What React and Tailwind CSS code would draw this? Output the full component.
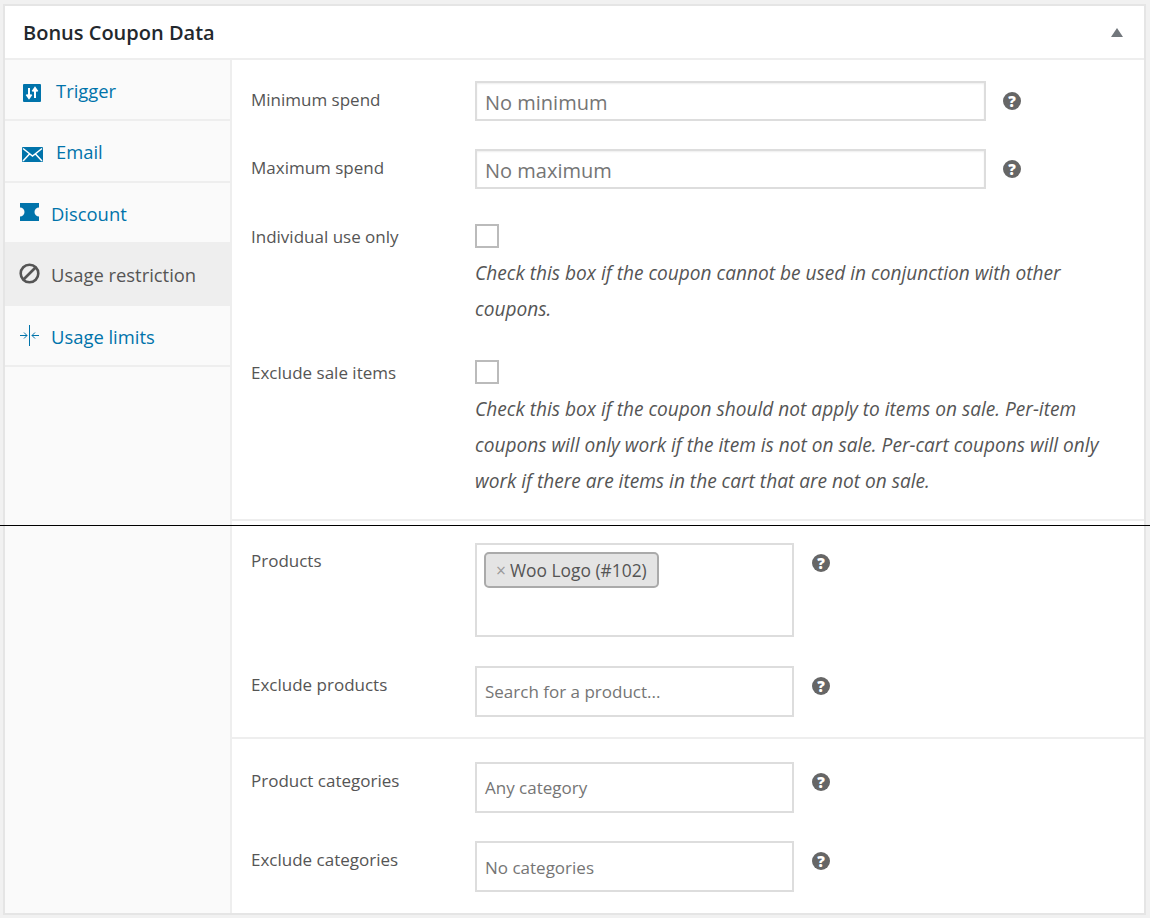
function HelpTip() {
  return (
    <span className="flex w-[18px] h-[18px] shrink-0 items-center justify-center rounded-full bg-[#666] text-[15px] leading-none font-extrabold text-white">?</span>
  );
}

function TextField({ placeholder }) {
  return (
    <div className="flex h-[40px] w-[511px] items-center border-2 border-[#ddd] bg-white pl-2 pt-[3px] text-[20px] text-[#757575] shadow-[inset_0_1px_2px_rgba(0,0,0,0.07)]">
      {placeholder}
    </div>
  );
}

function SelectField({ placeholder, className = "" }) {
  return (
    <div className={`flex h-[51px] w-[319px] items-center border-2 border-[#ddd] bg-white pl-2 text-[17px] text-[#757575] ${className}`}>
      {placeholder}
    </div>
  );
}

function Tab({ icon, label, active, h }) {
  return (
    <div className={`flex items-center text-[18.4px] ${h} ${active ? "bg-[#eee] text-[#555]" : "text-[#0073aa]"}`}>
      {icon}
      <span>{label}</span>
    </div>
  );
}

const tabs = [
  {
    label: "Trigger",
    h: "h-[61px] pt-[2px] border-b-2 border-[#eee]",
    icon: (
      <svg className="ml-[18px] mr-[15px] mt-[4px] w-[18px] h-[18px]" viewBox="0 0 18 18">
        <rect width="18" height="18" rx="1" fill="#0073aa" />
        <path d="M6 4v9M3.500 10.500 6 14l2.500-3.500M12 14V5M9.500 7.500 12 4l2.500 3.500" stroke="#fff" strokeWidth="2" fill="none" />
      </svg>
    ),
  },
  {
    label: "Email",
    h: "h-[62px] pt-[2px] border-b-2 border-[#eee]",
    icon: (
      <svg className="ml-[17px] mr-[13px] mt-[4px] w-[21px] h-[15px]" viewBox="0 0 21 15">
        <rect width="21" height="15" rx="1" fill="#0073aa" />
        <path d="M1 1.500 10.500 9 20 1.500M1 14l6.500-7M20 14l-6.500-7" stroke="#fff" strokeWidth="1.500" fill="none" />
      </svg>
    ),
  },
  {
    label: "Discount",
    h: "h-[59px] pt-[2px]",
    icon: (
      <svg className="ml-[14px] mr-[11px] mb-[3px] w-[21px] h-[18px]" viewBox="0 0 21 18">
        <path d="M1 0h19v4.500a4.500 4.500 0 0 0 0 9V18H1v-4.500a4.500 4.500 0 0 0 0-9z" fill="#0073aa" />
      </svg>
    ),
  },
  {
    label: "Usage restriction",
    active: true,
    h: "h-[64px] pt-[2px]",
    icon: (
      <svg className="ml-[14px] mr-[11px] mb-[3px] w-[21px] h-[21px]" viewBox="0 0 21 21">
        <circle cx="10.500" cy="10.500" r="8.800" stroke="#555" strokeWidth="2.600" fill="none" />
        <path d="M4.500 16.500l12-12" stroke="#555" strokeWidth="2.600" />
      </svg>
    ),
  },
  {
    label: "Usage limits",
    h: "h-[61px] pt-[3px] border-b-2 border-[#eee]",
    icon: (
      <svg className="ml-[14px] mr-[11px] mb-[4px] w-[21px] h-[21px]" viewBox="0 0 21 21" stroke="#0073aa" fill="none">
        <path d="M10.500 0v21" />
        <path d="M1 10.500h7M5 7.500l3 3-3 3M20 10.500h-7M16 7.500l-3 3 3 3" />
      </svg>
    ),
  },
];

function Label({ children, className = "" }) {
  return <div className={`w-[224px] shrink-0 text-[17px] text-[#555] ${className}`}>{children}</div>;
}

function Checkbox() {
  return <div className="w-[24px] h-[24px] border-2 border-[#bbb] bg-white" />;
}

export default function App() {
  return (
    <div className="relative h-[918px] w-[1150px] overflow-hidden bg-[#f1f1f1] pt-[4px] pl-[3px] font-['Open_Sans',sans-serif]">
      <div className="h-[911px] w-[1143px] border-2 border-[#e5e5e5] bg-white flex flex-col">
        <div className="flex h-[54px] shrink-0 items-center justify-between border-b-2 border-[#eee] pl-[18px] pr-[21px]">
          <h2 className="pt-[2px] text-[20px] font-semibold text-[#23282d]">Bonus Coupon Data</h2>
          <span className="w-0 h-0 border-x-[6px] border-x-transparent border-b-[9px] border-b-[#72777c]" />
        </div>
        <div className="flex flex-1">
          <div className="w-[227px] shrink-0 border-r-2 border-[#eee] bg-[#fafafa]">
            {tabs.map((t) => (
              <Tab key={t.label} {...t} />
            ))}
          </div>
          <div className="flex-1">
            <div className="h-[461px] border-b-2 border-[#eee] pl-[19px] pt-[21px]">
              <div className="flex items-center h-[40px]">
                <Label className="pb-[2px]">Minimum spend</Label>
                <TextField placeholder="No minimum" />
                <span className="ml-[17px]"><HelpTip /></span>
              </div>
              <div className="mt-[28px] flex items-center h-[40px]">
                <Label className="pb-[2px]">Maximum spend</Label>
                <TextField placeholder="No maximum" />
                <span className="ml-[17px]"><HelpTip /></span>
              </div>
              <div className="mt-[35px] flex">
                <Label>Individual use only</Label>
                <div className="flex-1 pr-[30px]">
                  <Checkbox />
                  <p className="mt-[7px] text-[19.1px] leading-[36px] italic text-[#555]">Check this box if the coupon cannot be used in conjunction with other coupons.</p>
                </div>
              </div>
              <div className="mt-[33px] flex">
                <Label>Exclude sale items</Label>
                <div className="flex-1 pr-[30px]">
                  <Checkbox />
                  <p className="mt-[7px] text-[19.1px] leading-[36px] italic text-[#555]">Check this box if the coupon should not apply to items on sale. Per-item coupons will only work if the item is not on sale. Per-cart coupons will only work if there are items in the cart that are not on sale.</p>
                </div>
              </div>
            </div>
            <div className="h-[218px] border-b-2 border-[#eee] pl-[19px] pt-[22px]">
              <div className="flex">
                <Label className="pt-[5px]">Products</Label>
                <div className="h-[94px] w-[319px] border-2 border-[#ddd] bg-white p-[7px]">
                  <span className="inline-flex h-[36px] items-center rounded-[5px] border-2 border-[#aaa] bg-[#e4e4e4] px-[10px] text-[17.4px] text-[#555]">
                    <span className="mr-[4px] text-[#999]">×</span>Woo Logo (#102)
                  </span>
                </div>
                <span className="ml-[18px] mt-[11px]"><HelpTip /></span>
              </div>
              <div className="mt-[29px] flex">
                <Label className="pt-[6px]">Exclude products</Label>
                <SelectField placeholder="Search for a product..." />
                <span className="ml-[18px] mt-[11px]"><HelpTip /></span>
              </div>
            </div>
            <div className="pl-[19px] pt-[23px]">
              <div className="flex">
                <Label className="pt-[6px]">Product categories</Label>
                <SelectField placeholder="Any category" />
                <span className="ml-[18px] mt-[11px]"><HelpTip /></span>
              </div>
              <div className="mt-[28px] flex">
                <Label className="pt-[6px]">Exclude categories</Label>
                <SelectField placeholder="No categories" className="pt-[2px]" />
                <span className="ml-[18px] mt-[11px]"><HelpTip /></span>
              </div>
            </div>
          </div>
        </div>
      </div>
      <div className="absolute left-0 top-[525px] h-px w-full bg-black" />
    </div>
  );
}
